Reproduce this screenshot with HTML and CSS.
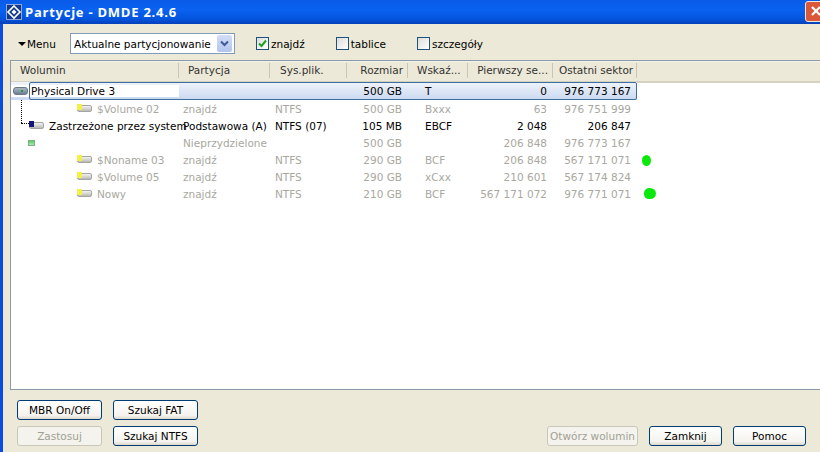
FILE: index.html
```html
<!DOCTYPE html>
<html>
<head>
  <meta charset="utf-8">
  <link rel="stylesheet" href="styles.css">
</head>
<body>
  <div class="window">
    <div class="titlebar">
      <svg class="app-icon" width="16" height="16" viewBox="0 0 16 16">
        <rect x="0.5" y="0.5" width="15" height="15" fill="#123a8c" stroke="#8fa8dc"/>
        <path d="M8 2 L14 8 L8 14 L2 8 Z" fill="none" stroke="#fff" stroke-width="1.6"/>
        <path d="M8 5.5 L10.5 8 L8 10.5 L5.5 8 Z" fill="#fff"/>
      </svg>
      <span class="title-text">Partycje - DMDE 2.4.6</span>
      <div class="close-btn">
        <svg width="16" height="16" viewBox="0 0 16 16"><path d="M4 4 L12 12 M12 4 L4 12" stroke="#fff" stroke-width="2.2"/></svg>
      </div>
    </div>

    <div class="body">
      <div class="toolbar">
        <div class="menu"><span class="menu-arrow"></span>Menu</div>
        <div class="combo">
          <span>Aktualne partycjonowanie</span>
          <div class="combo-btn">
            <svg width="9" height="7" viewBox="0 0 9 7"><path d="M1 1.5 L4.5 5 L8 1.5" fill="none" stroke="#3f5a94" stroke-width="2"/></svg>
          </div>
        </div>
        <label class="check check-first">
          <span class="box">
            <svg width="11" height="11" viewBox="0 0 11 11"><path d="M2 5.5 L4.5 8 L9 2.5" fill="none" stroke="#21a121" stroke-width="2"/></svg>
          </span>znajdź
        </label>
        <label class="check check-second"><span class="box"></span>tablice</label>
        <label class="check"><span class="box"></span>szczegóły</label>
      </div>

      <div class="list">
        <div class="list-head">
          <div class="cell c-vol">Wolumin</div>
          <div class="cell c-part">Partycja</div>
          <div class="cell c-fs">Sys.plik.</div>
          <div class="cell c-size num">Rozmiar</div>
          <div class="cell c-flag">Wskaź...</div>
          <div class="cell c-first num">Pierwszy se...</div>
          <div class="cell c-last num">Ostatni sektor</div>
        </div>

        <div class="tree-v"></div>
        <div class="tree-h"></div>
        <div class="blob blob-a"></div>
        <div class="blob blob-b"></div>

        <div class="row selected">
          <div class="cell c-vol">
            <span class="ico ico-disk"></span><span class="sel-name">Physical Drive 3</span>
          </div>
          <div class="cell c-part"></div>
          <div class="cell c-fs"></div>
          <div class="cell c-size num">500 GB</div>
          <div class="cell c-flag">T</div>
          <div class="cell c-first num">0</div>
          <div class="cell c-last num">976 773 167</div>
        </div>

        <div class="row muted">
          <div class="cell c-vol lvl-2"><span class="ico ico-vol"></span>$Volume 02</div>
          <div class="cell c-part">znajdź</div>
          <div class="cell c-fs">NTFS</div>
          <div class="cell c-size num">500 GB</div>
          <div class="cell c-flag">Bxxx</div>
          <div class="cell c-first num">63</div>
          <div class="cell c-last num">976 751 999</div>
        </div>

        <div class="row">
          <div class="cell c-vol lvl-1"><span class="ico ico-vol ico-sys"></span>Zastrzeżone przez system</div>
          <div class="cell c-part">Podstawowa (A)</div>
          <div class="cell c-fs">NTFS (07)</div>
          <div class="cell c-size num">105 MB</div>
          <div class="cell c-flag">EBCF</div>
          <div class="cell c-first num">2 048</div>
          <div class="cell c-last num">206 847</div>
        </div>

        <div class="row muted">
          <div class="cell c-vol lvl-free"><span class="ico ico-free"></span></div>
          <div class="cell c-part">Nieprzydzielone</div>
          <div class="cell c-fs"></div>
          <div class="cell c-size num">500 GB</div>
          <div class="cell c-flag"></div>
          <div class="cell c-first num">206 848</div>
          <div class="cell c-last num">976 773 167</div>
        </div>

        <div class="row muted">
          <div class="cell c-vol lvl-2"><span class="ico ico-vol"></span>$Noname 03</div>
          <div class="cell c-part">znajdź</div>
          <div class="cell c-fs">NTFS</div>
          <div class="cell c-size num">290 GB</div>
          <div class="cell c-flag">BCF</div>
          <div class="cell c-first num">206 848</div>
          <div class="cell c-last num">567 171 071</div>
        </div>

        <div class="row muted">
          <div class="cell c-vol lvl-2"><span class="ico ico-vol"></span>$Volume 05</div>
          <div class="cell c-part">znajdź</div>
          <div class="cell c-fs">NTFS</div>
          <div class="cell c-size num">290 GB</div>
          <div class="cell c-flag">xCxx</div>
          <div class="cell c-first num">210 601</div>
          <div class="cell c-last num">567 174 824</div>
        </div>

        <div class="row muted">
          <div class="cell c-vol lvl-2"><span class="ico ico-vol"></span>Nowy</div>
          <div class="cell c-part">znajdź</div>
          <div class="cell c-fs">NTFS</div>
          <div class="cell c-size num">210 GB</div>
          <div class="cell c-flag">BCF</div>
          <div class="cell c-first num">567 171 072</div>
          <div class="cell c-last num">976 771 071</div>
        </div>
      </div>

      <div class="footer">
        <div class="btn-grid">
          <button class="btn">MBR On/Off</button>
          <button class="btn">Szukaj FAT</button>
          <button class="btn" disabled>Zastosuj</button>
          <button class="btn">Szukaj NTFS</button>
        </div>
        <div class="btn-right">
          <button class="btn btn-open" disabled>Otwórz wolumin</button>
          <button class="btn">Zamknij</button>
          <button class="btn">Pomoc</button>
        </div>
      </div>
    </div>
  </div>
</body>
</html>
```

FILE: styles.css
```css
* {
  box-sizing: border-box;
  margin: 0;
  padding: 0;
}

html, body {
  width: 820px;
  height: 452px;
  overflow: hidden;
}

body {
  font-family: "DejaVu Sans", sans-serif;
  font-size: 10.5px;
  color: #000;
  background: #ece9d8;
}

.window {
  height: 452px;
  display: flex;
  flex-direction: column;
  border-left: 3px solid #0a4be0;
}

/* title bar */
.titlebar {
  height: 24px;
  margin-left: -3px;
  padding-left: 6px;
  display: flex;
  align-items: center;
  gap: 3px;
  background: linear-gradient(to bottom, #0a5ae8 0%, #0a62f0 40%, #0353dc 80%, #0340b8 100%);
}

.app-icon {
  flex: 0 0 16px;
}

.title-text {
  flex: 1;
  font-family: "Open Sans", sans-serif;
  font-weight: 700;
  font-size: 13px;
  letter-spacing: 0.75px;
  color: #fff;
}

.close-btn {
  width: 21px;
  height: 21px;
  margin-right: -6px;
  margin-top: -2px;
  display: flex;
  align-items: center;
  justify-content: center;
  background: #d9583a;
  border: 1px solid #f0e6e0;
  border-radius: 3px;
}

.body {
  flex: 1;
  display: flex;
  flex-direction: column;
}

/* toolbar */
.toolbar {
  height: 36px;
  padding: 9px 0 0 15px;
  display: flex;
  align-items: flex-start;
}

.menu {
  width: 52px;
  height: 21px;
  display: flex;
  align-items: center;
  gap: 1px;
}

.menu-arrow {
  width: 0;
  height: 0;
  border-left: 4px solid transparent;
  border-right: 4px solid transparent;
  border-top: 4px solid #000;
}

.combo {
  width: 165px;
  height: 21px;
  margin-right: 21px;
  padding: 0 2px 0 3px;
  display: flex;
  align-items: center;
  justify-content: space-between;
  background: #fff;
  border: 1px solid #7f9db9;
}

.combo-btn {
  width: 15px;
  height: 17px;
  display: flex;
  align-items: center;
  justify-content: center;
  background: linear-gradient(to bottom, #d3def5, #b0c4ee);
  border-radius: 2px;
}

.check {
  display: flex;
  align-items: center;
  height: 21px;
  gap: 2px;
  margin-right: 22px;
}

.check-first {
  margin-right: 31px;
}

.check-second {
  margin-right: 31px;
}

.box {
  width: 13px;
  height: 13px;
  display: flex;
  align-items: center;
  justify-content: center;
  border: 1px solid #1c5180;
  background: linear-gradient(135deg, #dcdcd7, #fff);
}

/* list */
.list {
  position: relative;
  height: 330px;
  margin-left: 7px;
  background: #fff;
  border-top: 1px solid #8c9aa6;
  border-bottom: 1px solid #8c9aa6;
  border-left: 1px solid #8c9aa6;
}

.list-head {
  height: 22px;
  padding-bottom: 3px;
  display: flex;
  align-items: center;
  background: #ece9d8;
  border-top: 1px solid #f5f3ea;
  border-bottom: 2px solid #d6d2c2;
}

.list-head .cell {
  height: 15px;
  line-height: 15px;
  color: #333;
  border-right: 1px solid #c9c6b6;
}

.list-head .num {
  padding-right: 4px;
}

.row {
  height: 17px;
  display: flex;
  align-items: center;
}

.muted {
  color: #a8a8a0;
}

.cell {
  white-space: nowrap;
  padding: 0 6px;
}

.num {
  text-align: right;
}

.c-vol { width: 168px; padding-left: 9px; display: flex; align-items: center; }
.c-part { width: 91px; }
.c-fs { width: 77px; }
.c-size { width: 61px; }
.c-flag { width: 60px; padding-left: 17px; }
.c-first { width: 85px; padding-right: 6px; }
.c-last { width: 84px; }

.list-head .c-flag { padding-left: 9px; }
.list-head .c-part { padding-left: 9px; }
.list-head .c-fs { padding-left: 10px; }

.row .c-part { padding-left: 4px; }
.row .c-fs { padding-left: 5px; }

.lvl-1 { padding-left: 18px; }
.lvl-2 { padding-left: 66px; }
.lvl-free { padding-left: 17px; }

/* selected row */
.selected {
  position: relative;
  height: 18px;
  margin-top: -1px;
  background: linear-gradient(to bottom, #f0f4fb, #c9d8f0);
  background-size: 100% 100%;
  width: 626px;
}

.selected::after {
  content: "";
  position: absolute;
  left: 18px;
  right: 0;
  top: 0;
  bottom: 0;
  border: 1px solid #3c6e9e;
  border-radius: 2px;
  pointer-events: none;
}

.selected .c-vol {
  padding-left: 2px;
  background: #fff;
}

.sel-name {
  margin-left: 3px;
}

/* icons */
.ico {
  flex: 0 0 auto;
  display: inline-block;
  position: relative;
}

.ico-disk {
  width: 15px;
  height: 8px;
  background: linear-gradient(to bottom, #a9b5c2, #6f7f90);
  border-radius: 3px;
  border: 1px solid #6a7888;
}

.ico-disk::after {
  content: "";
  position: absolute;
  left: 7px;
  top: 2px;
  width: 2px;
  height: 2px;
  background: #1e9c4a;
}

.ico-vol {
  width: 15px;
  height: 7px;
  margin-right: 5px;
  background: linear-gradient(to bottom, #f2f2f2, #b9b9b4);
  border: 1px solid #a6a6a0;
  border-radius: 2px;
}

.ico-vol::before {
  content: "";
  position: absolute;
  left: -1px;
  top: -2px;
  width: 5px;
  height: 6px;
  background: #f4f04a;
}

.ico-sys {
  margin-right: 5px;
}

.ico-sys::before {
  background: #14147a;
}

.ico-free {
  width: 7px;
  height: 6px;
  background: linear-gradient(to bottom, #52d06a, #b0e8b0);
  border: 1px solid #7fae85;
}

/* tree lines and marks painted over the rows */
.tree-v {
  position: absolute;
  left: 10px;
  top: 36px;
  height: 26px;
  border-left: 1px dotted #000;
}

.tree-h {
  position: absolute;
  left: 10px;
  top: 62px;
  width: 8px;
  border-top: 1px dotted #000;
}

.blob {
  position: absolute;
  background: #0be80b;
}

.blob-a {
  left: 631px;
  top: 94px;
  width: 9px;
  height: 11px;
  border-radius: 50%;
}

.blob-b {
  left: 633px;
  top: 127px;
  width: 12px;
  height: 11px;
  border-radius: 45% 50% 50% 40%;
}

/* buttons */
.footer {
  flex: 1;
  padding: 10px 14px 0 14px;
  display: flex;
  justify-content: space-between;
}

.btn-grid {
  display: grid;
  grid-template-columns: 85px 85px;
  grid-auto-rows: 20px;
  column-gap: 11px;
  row-gap: 6px;
}

.btn-right {
  align-self: flex-start;
  margin-top: 26px;
  display: flex;
  gap: 11px;
}

.btn-right .btn {
  width: 73px;
}

.btn-right .btn-open {
  width: 91px;
  margin-right: 0;
}

.btn {
  font-family: inherit;
  font-size: inherit;
  height: 20px;
  color: #000;
  background: linear-gradient(to bottom, #fff, #f4f3ee 80%, #dcd8cc);
  border: 1px solid #003c74;
  border-radius: 3px;
}

.btn:disabled {
  color: #a1a192;
  background: #f4f3ee;
  border-color: #c9c7ba;
}
```
